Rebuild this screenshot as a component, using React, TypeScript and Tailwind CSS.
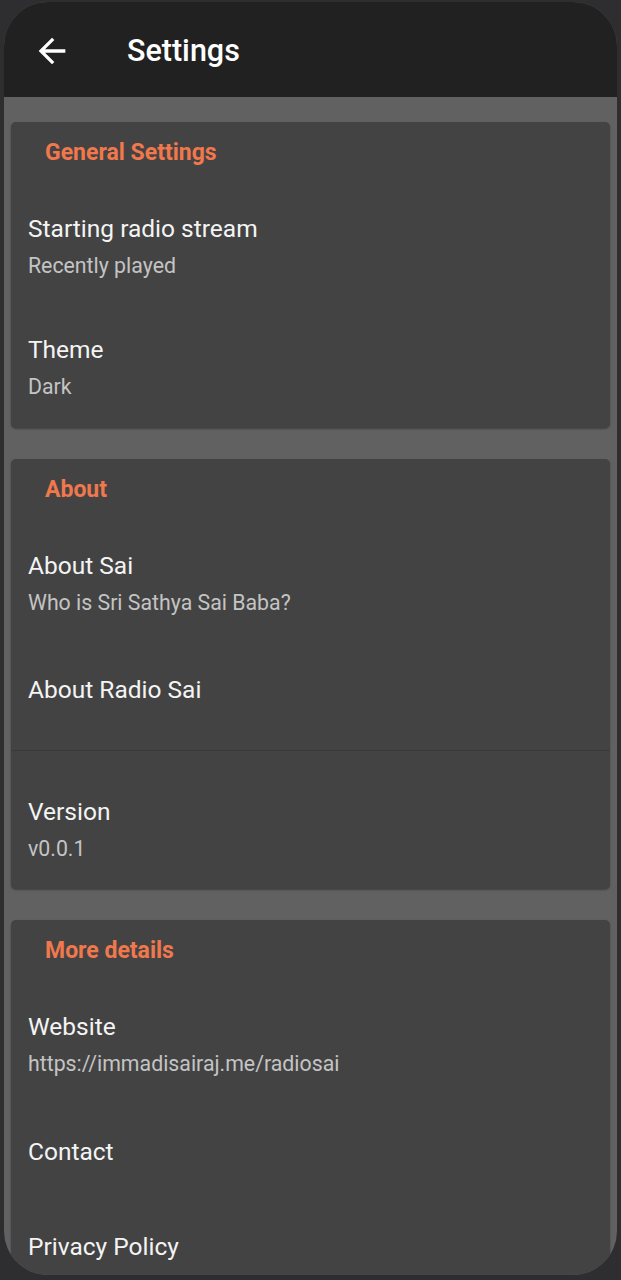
const font = { fontFamily: "Roboto, 'Noto Sans', sans-serif" };

type Item = { title: string; subtitle?: string; h?: string; pt?: string };

const SectionHeader = ({ label }: { label: string }) => (
  <div className="h-[64px] pl-[34px] pt-[17px]">
    <p className="text-[23px] font-bold leading-[28px] text-[#f0784c]">{label}</p>
  </div>
);

const Row = ({ title, subtitle, h, pt }: Item) => (
  <div className={`${h ?? "h-[121px]"} ${pt ?? "pt-[29px]"} pl-[17px]`}>
    <p className="text-[24.5px] leading-[28px] text-[#f4f4f4]">{title}</p>
    {subtitle && <p className="mt-[9px] text-[21.3px] leading-[28px] text-[#c4c4c4]">{subtitle}</p>}
  </div>
);

const Card = ({ children }: { children: React.ReactNode }) => (
  <div className="rounded-[5px] bg-[#434343] shadow-[0_1px_2px_rgba(0,0,0,0.35)]">{children}</div>
);

export default function App() {
  return (
    <div className="h-[1280px] w-[621px] overflow-hidden bg-[#2e2e31] pl-[4px] pt-[2px]" style={font}>
      <div className="flex h-[1273px] w-[613px] flex-col overflow-hidden rounded-[44px] bg-[#616161]">
        <header className="flex h-[95px] shrink-0 items-center bg-[#212121] pl-[28px] pt-[3px]">
          <svg viewBox="0 0 24 24" className="h-[40px] w-[40px]" fill="#ffffff">
            <path d="M20 11H7.83l5.59-5.59L12 4l-8 8 8 8 1.41-1.41L7.83 13H20v-2z" />
          </svg>
          <h1 className="ml-[55px] text-[30.5px] font-medium leading-none text-white">Settings</h1>
        </header>

        <main className="flex flex-col gap-[31px] px-[7px] pt-[25px]">
          <Card>
            <SectionHeader label="General Settings" />
            <Row title="Starting radio stream" subtitle="Recently played" />
            <Row title="Theme" subtitle="Dark" />
          </Card>

          <Card>
            <SectionHeader label="About" />
            <Row title="About Sai" subtitle="Who is Sri Sathya Sai Baba?" />
            <Row title="About Radio Sai" h="h-[106px]" pt="pt-[32px]" />
            <div className="h-px bg-[#3a3a3a]" />
            <div className="h-[17px]" />
            <Row title="Version" subtitle="v0.0.1" pt="pt-[30px]" />
          </Card>

          <Card>
            <SectionHeader label="More details" />
            <Row title="Website" subtitle="https://immadisairaj.me/radiosai" />
            <Row title="Contact" h="h-[95px]" pt="pt-[33px]" />
            <Row title="Privacy Policy" h="h-[120px]" pt="pt-[33px]" />
          </Card>
        </main>
      </div>
    </div>
  );
}
